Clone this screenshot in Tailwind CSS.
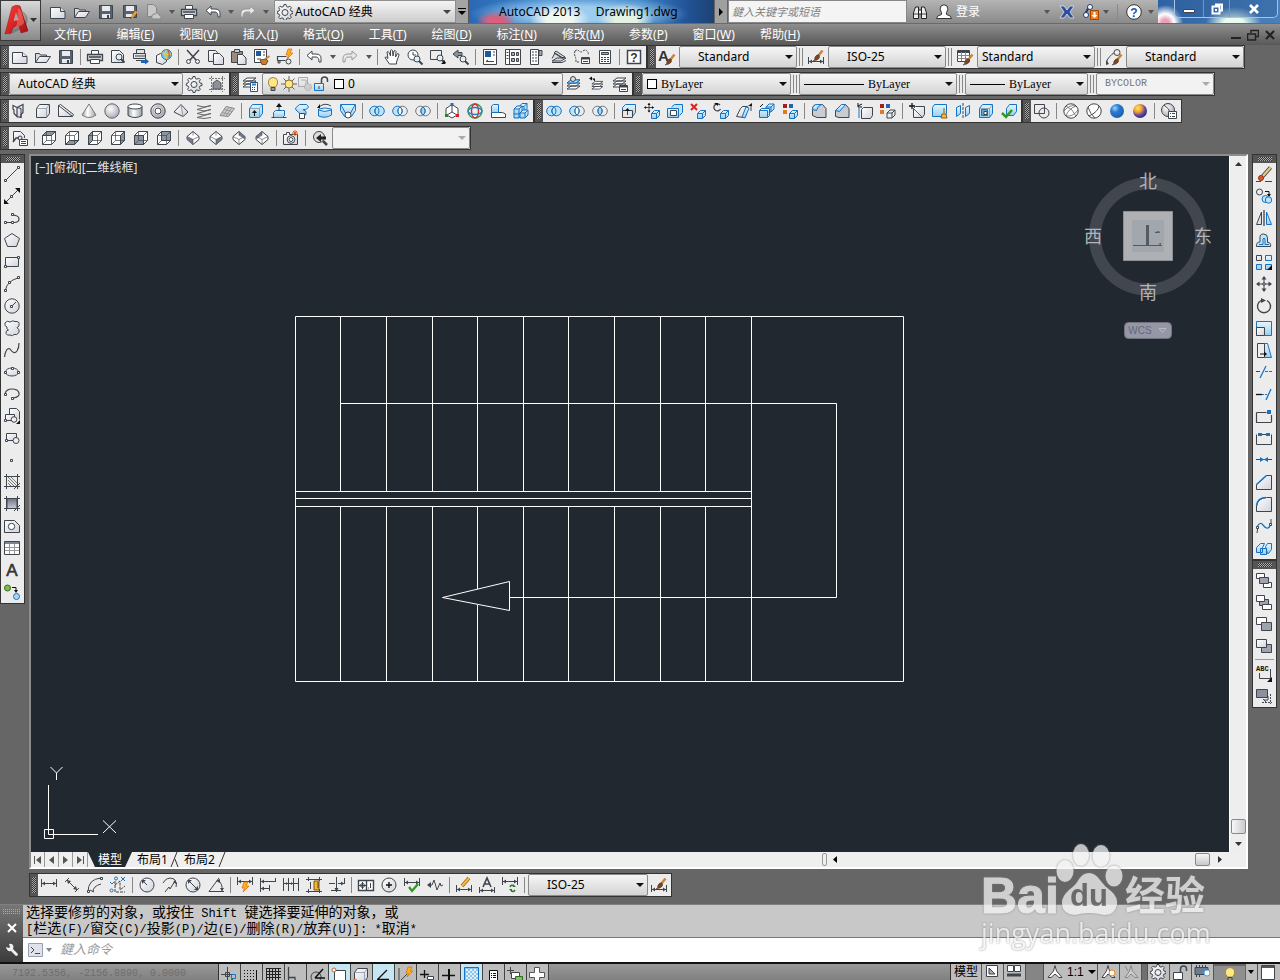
<!DOCTYPE html>
<html lang="zh-CN">
<head>
<meta charset="utf-8">
<title>AutoCAD 2013 - Drawing1.dwg</title>
<script src="https://cdn.jsdelivr.net/npm/@tailwindcss/browser@4"></script>
</head>
<body class="min-h-screen flex flex-col bg-[#666666] text-xs text-black font-['Noto_Sans','Noto_Sans_CJK_SC',sans-serif] overflow-x-hidden">

<svg class="absolute size-0" aria-hidden="true">
  <defs>
    <linearGradient id="gw" x1="0" y1="0" x2="1" y2="1"><stop offset="0" stop-color="#ffffff"/><stop offset="1" stop-color="#d0d3dc"/></linearGradient>
    <linearGradient id="gb" x1="0" y1="0" x2="0" y2="1"><stop offset="0" stop-color="#e6f6fe"/><stop offset="1" stop-color="#98cfef"/></linearGradient>
    <linearGradient id="gd" x1="0" y1="0" x2="0" y2="1"><stop offset="0" stop-color="#6d7480"/><stop offset="1" stop-color="#c9ccd2"/></linearGradient>
    <linearGradient id="gm" x1="0" y1="0" x2="1" y2="0"><stop offset="0" stop-color="#9da0a8"/><stop offset=".4" stop-color="#ffffff"/><stop offset="1" stop-color="#9da0a8"/></linearGradient>
    <radialGradient id="gs" cx=".4" cy=".35" r=".7"><stop offset="0" stop-color="#ffffff"/><stop offset="1" stop-color="#a3a7b2"/></radialGradient>
    <radialGradient id="gblue" cx=".35" cy=".3" r=".75"><stop offset="0" stop-color="#9ad4fa"/><stop offset=".4" stop-color="#2a7bd0"/><stop offset="1" stop-color="#1c5ea8"/></radialGradient>
    <radialGradient id="gsun" cx=".35" cy=".3" r=".8"><stop offset="0" stop-color="#ffe95a"/><stop offset=".35" stop-color="#f0a030"/><stop offset=".65" stop-color="#5a48a8"/><stop offset="1" stop-color="#252060"/></radialGradient>
    <linearGradient id="gred" x1="0" y1="0" x2="1" y2="1"><stop offset="0" stop-color="#f2463c"/><stop offset=".5" stop-color="#dc2222"/><stop offset="1" stop-color="#9c1114"/></linearGradient>
  </defs>
</svg>

<header class="flex bg-[#5c5c5c] shrink-0">
  <button aria-label="应用程序菜单" class="w-[41px] h-[41px] shrink-0 flex items-center border border-[#3a3a3a] bg-linear-to-b from-[#d8d8d8] to-[#8a8a8a] pl-[3px]">
    <svg viewBox="0 0 36 34" class="w-9 h-[34px]"><path d="M14 5Q30 12 20 24L5 31Z" fill="#555" opacity=".45"/><path d="M1 30 8 3Q12 0 16 2L24 27 17 29 15 22 9 23 7 29Z" fill="url(#gred)" stroke="#8e1014" stroke-width=".5"/><path d="M9.500 17 12 8 14.500 16Z" fill="#b9a0a0"/><path d="M14 4Q27 14 18 21L10 25 13 20Z" fill="#ff9a90" opacity=".4"/><path d="M24 27 16 2 20 17Z" fill="#7a0b0d"/><path d="M26 14h7l-3.500 4z" fill="#333"/></svg>
  </button>
  <div class="flex-1 min-w-0 flex flex-col">
    <div class="flex h-6 bg-[#6a6a6a]">
      <div class="flex h-[23px] items-center pl-[5px] w-[233px] shrink-0 bg-linear-to-b from-[#b4b4b4] to-[#8c8c8c]" data-qat="new open save saveas export ▾ print undo ▾ redo ▾"></div>
      <label class="flex h-[23px] w-[182px] shrink-0 items-center border border-[#8f8f8f] bg-linear-to-b from-[#f4f4f4] to-[#cdcdcd] pl-[2px] pr-1">
        <svg data-i="gear" class="size-4 shrink-0"></svg>
        <select aria-label="工作空间" class="flex-1 min-w-0 appearance-none bg-transparent outline-none text-xs pl-[2px]"><option>AutoCAD 经典</option></select>
        <svg viewBox="0 0 8 4" class="w-2 h-1 shrink-0"><path d="M0 0h8L4 4z" fill="#444"/></svg>
      </label>
      <button aria-label="自定义快速访问工具栏" class="w-[13px] h-[23px] shrink-0 grid place-items-center bg-[#a4a4a4] border-r border-[#555]"><svg viewBox="0 0 8 8" class="size-2"><path d="M0 0h8v1H0zM0 3h8L4 7z"/></svg></button>
      <div class="flex-1 min-w-0 h-[23px] overflow-hidden flex items-center pl-[30px] whitespace-pre bg-[radial-gradient(ellipse_20px_10px_at_11%_92%,#d8607c_40%,transparent),radial-gradient(ellipse_30px_16px_at_37%_85%,#f0f6f0_45%,transparent),radial-gradient(ellipse_28px_16px_at_64%_85%,#e4f2e4_40%,transparent),radial-gradient(ellipse_110px_18px_at_45%_60%,#9cccee_40%,transparent),linear-gradient(to_right,#2a68b4,#3d85cc_30%,#3f86c8_70%,#22559a_88%,#1c4272)]">AutoCAD 2013     Drawing1.dwg</div>
      <button aria-label="展开" class="w-[14px] h-[23px] shrink-0 grid place-items-center bg-[#a0a0a0] border-x border-[#666]"><svg viewBox="0 0 4 8" class="w-1 h-2"><path d="M0 0v8l4-4z"/></svg></button>
      <input aria-label="搜索" placeholder="鍵入关键字或短语" class="w-[179px] h-[23px] shrink-0 bg-[#f4f4f4] border border-[#888] pl-[3px] text-[11px] italic placeholder:text-[#808080] outline-none">
      <div class="flex items-center h-[23px] w-[251px] shrink-0 pl-[5px] bg-linear-to-b from-[#b4b4b4] to-[#8a8a8a] text-white">
        <button aria-label="搜索"><svg data-i="binoc" class="size-4"></svg></button>
        <button class="flex items-center ml-2 gap-1 w-[108px]"><svg data-i="person" class="size-4"></svg>登录</button>
        <svg viewBox="0 0 6 4" class="w-[6px] h-1"><path d="M0 0h6L3 4z" fill="#555"/></svg>
        <button aria-label="Exchange" class="ml-[9px]"><svg data-i="exch" class="size-4"></svg></button>
        <button aria-label="更新" class="ml-2"><svg data-i="sat" class="size-4"></svg></button>
        <svg viewBox="0 0 6 4" class="w-[6px] h-1 ml-1"><path d="M0 0h6L3 4z" fill="#555"/></svg>
        <span class="w-px h-4 bg-[#8a8a8a] ml-2"></span>
        <button aria-label="帮助" class="ml-2"><svg data-i="qcircle" class="size-4"></svg></button>
        <svg viewBox="0 0 6 4" class="w-[6px] h-1 ml-[6px]"><path d="M0 0h6L3 4z" fill="#555"/></svg>
      </div>
      <div class="flex items-start h-[23px] w-[122px] shrink-0 pl-4 bg-[radial-gradient(circle_18px_at_6%_100%,#e8a0b8_20%,#ffffff_50%,transparent),radial-gradient(ellipse_28px_16px_at_62%_100%,#e8fbee_35%,transparent),linear-gradient(to_right,#2e62a4,#4a80ba)]">
        <div class="flex h-[18px] w-[104px] rounded-b-[5px] border border-t-0 border-[#a9c4e2] divide-x divide-[#6f96c4] bg-[#2e5c98]/40">
          <button aria-label="最小化" class="w-[29px] grid place-items-center"><svg viewBox="0 0 12 10" class="w-3 h-[10px]"><path d="M.5 5.500h11v3H.5z" fill="#fff" stroke="#445"/></svg></button>
          <button aria-label="还原" class="w-[26px] grid place-items-center"><svg viewBox="0 0 12 12" class="size-3"><path d="M4 1.500h7v6H9.500M1.500 3.500h7v7h-7z" fill="none" stroke="#fff" stroke-width="2"/><path d="M4 6h2v2H4z" fill="#fff"/></svg></button>
          <button aria-label="关闭" class="flex-1 grid place-items-center"><svg viewBox="0 0 12 10" class="w-3 h-[10px]"><path d="M2 1l8 8M10 1 2 9" stroke="#fff" stroke-width="2.600"/></svg></button>
        </div>
      </div>
    </div>
    <nav class="flex gap-px h-[21px] items-center pl-px text-white bg-linear-to-b from-[#8f8f8f] to-[#585858] *:[a]:px-3">
      <a href="#">文件(<u>F</u>)</a><a href="#">编辑(<u>E</u>)</a><a href="#">视图(<u>V</u>)</a><a href="#">插入(<u>I</u>)</a><a href="#">格式(<u>O</u>)</a><a href="#">工具(<u>T</u>)</a><a href="#">绘图(<u>D</u>)</a><a href="#">标注(<u>N</u>)</a><a href="#">修改(<u>M</u>)</a><a href="#">参数(<u>P</u>)</a><a href="#">窗口(<u>W</u>)</a><a href="#">帮助(<u>H</u>)</a>
      <div class="ml-auto flex gap-[5px] pr-1">
        <button aria-label="最小化图形"><svg viewBox="0 0 12 12" class="size-3"><path d="M1 9h10" stroke="#222" stroke-width="2"/></svg></button>
        <button aria-label="还原图形"><svg viewBox="0 0 12 12" class="size-3"><path d="M4 4V1.500h7.500v6H9M.5 5h8v6h-8z" fill="none" stroke="#222" stroke-width="1.500"/></svg></button>
        <button aria-label="关闭图形"><svg viewBox="0 0 12 12" class="size-3"><path d="M2 2l8 8M10 2l-8 8" stroke="#222" stroke-width="2.200"/></svg></button>
      </div>
    </nav>
  </div>
</header>

<div class="flex flex-col gap-[3px] shrink-0">
  <div class="flex">
    <div data-bar="new open save | print preview publish globe | cut copy paste match block | undo ▾ redo ▾ | pan zoomrt zoomwin zoomprev | props design toolpal sheets markup calc | help"></div>
    <div data-bar="textstyle [118,18,Standard] ‖ dimstyle [118,18,ISO-25] ‖ tablestyle [118,4,Standard] ‖ mlstyle [118,18,Standard]"></div>
  </div>
  <div class="flex">
    <div data-bar="[174,8,AutoCAD&nbsp;经典] gear wssettings"></div>
    <div data-bar="layerprops {layer} laycur layprev laystate"></div>
    <div data-bar="{color} ‖ {ltype} ‖ {lweight} ‖ {plot}"></div>
  </div>
  <div class="flex">
    <div data-bar="polysolid box wedge cone sphere cylinder torus pyramid helix planar | extrude presspull sweep revolve loft | union subtract intersect | 3dmove 3drotate 3dalign 3darray"></div>
    <div data-bar="union subtract intersect | extface moveface offface delface rotface taperface copyface colorface | filletedge chamferedge copyedge coloredge | imprint clean separate shell check"></div>
    <div data-bar="wire2d | wire3d hidden realistic concept | vsmanage"></div>
  </div>
  <div class="flex">
    <div data-bar="viewmgr | vtop vbottom vleft vright vfront vback | isosw isose isone isonw | camera | prevview {view}"></div>
  </div>
</div>

<main class="flex-1 min-h-0 flex pt-1">
  <div class="w-[25px] shrink-0"><div data-vbar="line xline pline polygon rect arc circle revcloud spline ellipse earc insert mkblock point hatch gradient region table mtext addsel"></div></div>

  <section class="flex-1 min-w-0 ml-1 mr-1 flex flex-col">
    <div class="flex-1 min-h-0 flex flex-col border-2 border-[#8c8c8c] border-r-white border-b-white bg-[#efefef]">
      <div class="flex-1 min-h-[600px] flex">
        <div class="relative flex-1 min-w-0 bg-[#212830] overflow-hidden">
          <svg class="absolute inset-0 size-full" viewBox="31 156 1198 696" preserveAspectRatio="xMinYMin slice" fill="none" stroke="#fff" role="img" aria-label="楼梯平面图">
            <path d="M295.500 316.500h608v365h-608zM295.500 491.500h456M295.500 498.500h456M295.500 506.500h456M751.500 316.500v365"/>
            <path d="M340.500 316v175M386.500 316v175M432.500 316v175M477.500 316v175M523.500 316v175M568.500 316v175M614.500 316v175M660.500 316v175M705.500 316v175"/>
            <path d="M340.500 506v175M386.500 506v175M432.500 506v175M477.500 506v83M477.500 605v76M523.500 506v175M568.500 506v175M614.500 506v175M660.500 506v175M705.500 506v175"/>
            <path d="M340.500 403.500h496v194h-327M442.500 597.500l67-16v29z"/>
            <path d="M48.500 785v49.500h49.500M44.500 829.500h9v9h-9z"/>
            <path d="M50.500 767l6 6 6-6M56.500 773v7M103 820.500l13 12.500M116 820.500l-13 12.500"/>
          </svg>
          <p class="relative w-fit pl-1 pt-1 leading-4 text-[#e4e4e4]">[−][俯视][二维线框]</p>
          <div class="absolute right-[15px] top-3 w-[132px]">
            <svg viewBox="0 0 132 178" class="w-[132px] h-[178px]" font-size="18" text-anchor="middle" fill="#b2b4b7" font-family="Noto Sans CJK SC">
              <circle cx="66" cy="68.500" r="53" fill="none" stroke="#41464f" stroke-width="12"/>
              <path d="M41.500 43.500h49v49h-49z" fill="#aeb0b3" stroke="#8d9094"/><path d="M50 52h32v32H50z" fill="#a2a7ae"/>
              <path d="M64 57h3v20h13v1H51v-1h13zM73 64l4-1 1 2h-5zM76 76l3-1v2z" fill="#555b62"/>
              <text x="66" y="20">北</text><text x="66" y="131">南</text><text x="11" y="75">西</text><text x="121" y="75">东</text>
              <rect x="42.500" y="154.500" width="47" height="16" rx="4" fill="#9597a7" stroke="#70727e"/>
              <text x="58" y="166" font-size="10" fill="#65677a" font-family="Liberation Sans">WCS</text><path d="M77 160.500h7l-3.500 4z" fill="none" stroke="#b9bbc6"/>
            </svg>
          </div>
        </div>
        <div class="w-[17px] shrink-0 bg-[#eeeeee] border-l border-white flex flex-col items-center justify-between pt-[6px] pb-[6px]">
          <svg viewBox="0 0 7 4" class="w-[7px] h-1"><path d="M0 4h7L3.500 0z" fill="#333"/></svg>
          <div class="flex flex-col items-center gap-2"><div class="w-[15px] h-[15px] border border-[#888] rounded-[2px] bg-linear-to-r from-[#f8f8f8] to-[#cbcbd0]"></div><svg viewBox="0 0 7 4" class="w-[7px] h-1"><path d="M0 0h7L3.500 4z" fill="#333"/></svg></div>
        </div>
      </div>
      <div class="h-[15px] shrink-0 flex items-center">
        <div class="flex divide-x divide-[#999] border-r border-[#999] h-[15px]">
          <button aria-label="首页" class="w-[14px] grid place-items-center"><svg viewBox="0 0 8 8" class="size-2"><path d="M0 0h1v8H0zM7 0v8L2 4z" fill="#555"/></svg></button>
          <button aria-label="上一页" class="w-[14px] grid place-items-center"><svg viewBox="0 0 8 8" class="size-2"><path d="M6 0v8L1 4z" fill="#555"/></svg></button>
          <button aria-label="下一页" class="w-[14px] grid place-items-center"><svg viewBox="0 0 8 8" class="size-2"><path d="M1 0v8l5-4z" fill="#555"/></svg></button>
          <button aria-label="末页" class="w-[14px] grid place-items-center"><svg viewBox="0 0 8 8" class="size-2"><path d="M7 0h1v8H7zM1 0v8l5-4z" fill="#555"/></svg></button>
        </div>
        <div class="flex h-[15px] items-center leading-[15px]">
          <button class="h-[15px] px-[10px] text-white bg-[#212830] [clip-path:polygon(0_0,100%_0,calc(100%-7px)_100%,7px_100%)]">模型</button>
          <button class="h-[15px] pl-[5px]">布局1</button>
          <svg viewBox="0 0 11 15" class="w-[11px] h-[15px]"><path d="M9 0 3 15M7 7l3 8" fill="none" stroke="#333"/></svg>
          <button class="h-[15px] pl-[5px]">布局2</button>
          <svg viewBox="0 0 11 15" class="w-[11px] h-[15px]"><path d="M10 0 4 15" fill="none" stroke="#333"/></svg>
        </div>
        <div class="ml-auto flex items-center w-[424px] shrink-0">
          <span class="w-[5px] h-[13px] border border-[#999] rounded-[2px]"></span>
          <svg viewBox="0 0 4 7" class="w-1 h-[7px] ml-[6px]"><path d="M4 0v7L0 3.500z"/></svg>
          <span class="ml-auto w-[15px] h-[13px] border border-[#888] rounded-[2px] bg-linear-to-b from-[#f8f8f8] to-[#c8c8cc]"></span>
          <svg viewBox="0 0 4 7" class="w-1 h-[7px] ml-2 mr-6"><path d="M0 0v7l4-3.500z" fill="#333"/></svg>
        </div>
      </div>
    </div>
    <div class="flex pt-[4px] pb-[7px]">
      <div data-bar="dlin dali darc dord | drad djog ddia dang | dquick dbase dcont dspace dbreak | dtol dcenter dinspect djogl | dedit dtedit dupdate | [120,18,ISO-25] dimstyle"></div>
    </div>
  </section>

  <div class="w-[26px] mr-[2px] shrink-0 flex flex-col">
    <div data-vbar="erase copyobj mirror offset array move rotate scale stretch trim extend breakpt break join chamfer fillet blend explode"></div>
    <div data-vbar="front back above under — textfront hatchback"></div>
  </div>
</main>

<section class="flex shrink-0 h-[58px] border-t border-[#808080]">
  <div class="w-[23px] shrink-0 flex flex-col items-center justify-between pt-1 pb-1 bg-linear-to-b from-[#777] to-[#3c3c3c]">
    <svg viewBox="0 0 17 5" class="w-[17px] h-[5px]"><path d="M0 .5h17M0 2.500h17M0 4.500h17" stroke="#aaa" stroke-dasharray="1 1"/></svg>
    <button aria-label="关闭"><svg viewBox="0 0 12 12" class="size-3"><path d="M2 2l8 8M10 2l-8 8" stroke="#fff" stroke-width="2"/></svg></button>
    <button aria-label="自定义"><svg viewBox="0 0 16 16" class="size-4"><path d="M2 5l3 1 1-1-1-3q4-1 4.500 3L9 7l5 5q0 2-2 2L7 9Q3 10 2 5z" fill="#eee"/></svg></button>
  </div>
  <div class="flex-1 min-w-0 flex flex-col">
    <div class="h-[33px] pt-px pl-[3px] bg-[#c8c8c8] border-b border-[#777] text-sm leading-[15px] whitespace-pre font-['Liberation_Mono','Noto_Sans_CJK_SC',monospace]"><p>选择要修剪的对象，或按住<span class="text-xs leading-[15px]"> Shift </span>键选择要延伸的对象，或</p><p class="[&>span]:text-xs [&>span]:leading-[15px]"><span>[</span>栏选<span>(F)/</span>窗交<span>(C)/</span>投影<span>(P)/</span>边<span>(E)/</span>删除<span>(R)/</span>放弃<span>(U)]: *</span>取消<span>*</span></p></div>
    <label class="flex-1 flex items-center bg-white pl-[5px]">
      <svg viewBox="0 0 15 14" class="w-[15px] h-[14px]"><path d="M.5.5h14v13H.5z" fill="#dfe2ea" stroke="#9a9fae"/><path d="M3 4l3 3-3 3M7 10.500h5" fill="none" stroke="#444"/></svg>
      <svg viewBox="0 0 6 4" class="w-[6px] h-1 ml-[3px]"><path d="M0 0h6L3 4z" fill="#888"/></svg>
      <input aria-label="命令" placeholder="鍵入命令" class="flex-1 ml-2 text-[13px] italic placeholder:text-[#9a9a9a] outline-none">
    </label>
  </div>
</section>

<footer class="h-[18px] shrink-0 overflow-hidden flex items-start border-t-2 border-[#111] bg-linear-to-b from-[#989898] to-[#808080]">
  <div class="w-[218px] shrink-0 pl-3 pt-[4px] text-[10px] leading-3 text-[#6e6e6e] whitespace-nowrap font-['Liberation_Mono',monospace]">7192.5356, -2156.8890, 0.0000</div>
  <div class="flex border-l border-[#333]" data-status="sinfer ssnap sgrid sortho spolar *sosnap s3dosnap *sotrack sducs sdyn slwt *stpy sqp ssc splus"></div>
  <div class="ml-auto flex h-4 border-l border-[#333] divide-x divide-[#555] bg-[#bdbdbd]">
    <button class="w-[31px] h-4 leading-4">模型</button>
    <button aria-label="布局" class="w-[22px] pl-1"><svg data-i="slay" class="size-4"></svg></button>
    <button aria-label="快速查看" class="w-[22px] pl-[2px]"><svg data-i="sqv" class="size-4"></svg></button>
    <span class="w-[18px] bg-[#858585]"></span>
    <button class="w-[54px] flex items-center pl-[3px] gap-1 font-['Liberation_Sans'] whitespace-nowrap"><svg data-i="sann" class="size-4 shrink-0"></svg>1:1<svg viewBox="0 0 8 4" class="w-2 h-1 shrink-0"><path d="M0 0h8L4 4z"/></svg></button>
    <button aria-label="注释可见性" class="w-[22px] pl-[3px]"><svg data-i="sannv" class="size-4"></svg></button>
    <button aria-label="自动缩放" class="w-[22px] pl-[3px]"><svg data-i="sanna" class="size-4"></svg></button>
    <span class="w-[6px] bg-[#707070]"></span>
    <button aria-label="工作空间切换" class="w-[22px] pl-[2px]"><svg data-i="gear" class="size-4"></svg></button>
    <button aria-label="锁定" class="w-[22px] pl-[2px]"><svg data-i="slock" class="size-4"></svg></button>
    <button aria-label="硬件加速" class="w-[22px] pl-[2px]"><svg data-i="shw" class="size-4"></svg></button>
    <button aria-label="隔离对象" class="w-[32px] pl-2 bg-[#8f8f8f] border-t-2 border-[#666]"><svg data-i="bulb" class="size-4"></svg></button>
    <button aria-label="状态栏菜单" class="w-[12px] pl-[2px]"><svg viewBox="0 0 6 4" class="w-[6px] h-1"><path d="M0 0h6L3 4z"/></svg></button>
    <button aria-label="全屏" class="w-[22px] pl-[2px]"><svg data-i="sfull" class="size-4"></svg></button>
  </div>
</footer>

<div class="pointer-events-none absolute right-[66px] top-[840px] w-[236px]">
  <svg viewBox="0 0 236 114" class="w-[236px] h-[114px] opacity-75 drop-shadow-[0_0_1px_#777]" fill="#f4f4f4">
    <text x="3" y="73" font-family="Liberation Sans" font-weight="700" font-size="50" stroke="#f4f4f4">Bai</text>
    <ellipse cx="87" cy="31" rx="8.500" ry="11"/><ellipse cx="103" cy="15" rx="8" ry="11"/><ellipse cx="123" cy="16" rx="8.500" ry="11"/><ellipse cx="136" cy="36" rx="8.500" ry="10.500"/>
    <path d="M111 33Q117 33 122 40 126 46 133 51 140 57 139 65 137 75 126 75 118 73 111 73 104 73 97 75 84 74 84 63 84 56 91 50 98 45 101 39 105 33 111 33Z"/>
    <text x="92" y="66" font-family="Liberation Sans" font-weight="700" font-size="31" fill="#6c6c6c">du</text>
    <text x="147" y="70" font-family="Noto Sans CJK SC" font-weight="700" font-size="40">经验</text>
    <text x="3" y="103" font-family="Open Sans" font-size="27">jingyan.baidu.com</text>
  </svg>
</div>

<script>
const D='#3f454d', B='#1673c4';
const p=(d,a='')=>`<path d="${d}" ${a}/>`;
const w='fill="url(#gw)"', b='fill="url(#gb)"', sb=`stroke="${B}"`, bb=`fill="url(#gb)" stroke="${B}"`, k=`fill="${D}" stroke="none"`, K='fill="#111" stroke="none"';
const lens=(x,y)=>`<circle cx="${x}" cy="${y}" r="3" fill="#dff0f8"/>`+p(`M${x+2} ${y+2}l3.500 3.500`,'stroke-width="2"');
const cubeS=(x,y,a=bb)=>p(`M${x} ${y+3}l3-3h5v5l-3 3h-5zM${x} ${y+3}h5v5M${x+5} ${y+3}l3-3`,a);
const cubeL=(a)=>p('M1.500 5.500l3-4h10v9l-3 4h-10z',a)+p('M1.500 5.500h10v9M11.500 5.500l3-4','stroke="#7f8894" stroke-width=".7"');
const face=(f)=>p('M1.500 5.500l4-4h9v9l-4 4h-9z','fill="#fff"')+p(f,'fill="#8d95a1"')+p('M1.500 5.500h9v9M10.500 5.500l4-4M5.500 1.500v9h9M1.500 14.500l4-4','stroke-width=".7"');
const iso=(f)=>p('M8 1.500l6 5v3l-6 5-6-5v-3z','fill="#fff"')+p(f,'fill="#747b87" stroke="none"')+p('M2 6.500l6 3 6-3M8 9.500v5M8 1.500v4','stroke-width=".6"');
const dot=(x,y)=>p(`M${x-1} ${y-1}h2v2h-2z`,'fill="#fff"');
const brush=p('M14.500 1.500l-4 5','stroke="#c98538" stroke-width="2.500"')+p('M11 6Q13 9 9 11L5 12Q7 11 7 8 9 5 11 6Z','fill="#7a4528" stroke="#55301b" stroke-width=".5"');
const dimH=(y)=>p(`M.5 ${y-4}v8M15.500 ${y-4}v8M1 ${y+.5}h14`)+p(`M1 ${y+.5}l3-2v4zM15 ${y+.5}l-3-2v4z`,k);
const uni=(l,r,m)=>`<circle cx="5.500" cy="8" r="4.800" fill="${l}" stroke="${l=='none'?'#71767e':B}"/><circle cx="10.500" cy="8" r="4.800" fill="${r}" stroke="${r=='none'?'#71767e':B}"/>`+p('M8 4a5 5 0 010 8 5 5 0 010-8z',`fill="${m}" stroke="${B}"`);
const bolt=p('M10 0l4 0-2 4h3l-6 6 1.500-4H8z','fill="#ffb01e" stroke="#e06a00" stroke-width=".7"');
const gearP='M7 .5h2l.5 2 1.500.7 1.900-1 1.400 1.400-1 1.900.7 1.500 2 .5v2l-2 .5-.7 1.500 1 1.900-1.400 1.400-1.900-1-1.500.7-.5 2H7l-.5-2-1.500-.7-1.900 1-1.400-1.400 1-1.900L2 10 .3 9.500v-2L2 7l.7-1.500-1-1.900 1.400-1.400 1.900 1L6.500 2.500z';
const layers=p('M1 13l4-3h9l-4 3zM1 10l4-3h9l-4 3zM1 7l4-3h9l-4 3z','fill="#fff"');
const I={
new:p('M.5 3.500h10l4.500 4v7H.5z',w)+p('M10.500 3.500v4H15',w),
open:p('M.5 13.500v-9h4l1 1.500h6v2','fill="#d8dade"')+p('M.5 13.500l4-6h11l-4 6z',w),
save:p('M1.500 1.500h13v13h-13z','fill="#59626f"')+p('M4 2h8v5H4zM4 10h8v4H4z','fill="#e8eaee" stroke="none"')+p('M9 11h2v3H9z',k),
saveas:p('M1.500 1.500h13v12h-13z','fill="#59626f"')+p('M4 2h8v5H4zM4 10h6v3H4z','fill="#e8eaee" stroke="none"')+p('M14.500 7.500l-5 6','stroke="#f0a030" stroke-width="2.500"')+p('M8 15l.5-2 1.500 1z',k),
export:p('M1.500 .5h6l3 3v9h-9z','fill="#c8c8c8" stroke="#858585"')+p('M6 14q-1-4 3-4 3-3 4 1 3 0 2 4H6z','fill="#c8c8c8" stroke="#858585"'),
print:p('M4.500 6V1.500h7V6','fill="#fff"')+p('M.5 5.500h15v6H.5z','fill="#d4d6da" stroke-width="1.300"')+p('M2 8h12',"stroke-width='1.500'")+p('M3.500 10.500h9v4h-9z','fill="#fff"'),
preview:p('M1.500 1.500h8l4 4v8h-12z',w)+lens(9,8),
publish:p('M3.500 5V.5h8V5M.5 4.500h12v5H.5zM3 11.500h6','fill="#e0e2e6"')+p('M2 7h10')+p('M8 11h4V9l4 3.500-4 3V14H8z','fill="#1864b8" stroke="none"'),
globe:p('M.5 6.500l4-2h6v8l-4 3-6-2z',w)+'<circle cx="10.500" cy="5.500" r="5" fill="#6ec6f0" stroke="#2b7d9c"/>'+p('M6 4q4 2 9 1M10 1q-2 5 1 9','stroke="#f5c33a" stroke-width="1.600"')+p('M12 1q2 4 1 8','stroke="#d2452c"'),
cut:p('M2 1l9 10M14 1L5 11','stroke-width="1.500"')+'<circle cx="3.500" cy="12.500" r="2"/><circle cx="12.500" cy="12.500" r="2"/>',
copy:p('M.5 1.500h7l2 2v9h-9z',w)+p('M5.500 4.500h6l4 4v7h-10z',w),
paste:p('M.5 2.500h11v11H.5z','fill="#9b8c7d"')+p('M3.500.5h5v3h-5z','fill="#ccc"')+p('M6.500 5.500h5l3.500 3.500v6.500H6.500z',w),
match:p('M.5.5h12v13H.5z','fill="#fff"')+p('M2 2h5v5H2z','fill="#1c5a9c" stroke="none"')+p('M9 3h2M9 6h2M3 10h4')+p('M15.500 7l-4 3','stroke="#c98538" stroke-width="2"')+p('M6 11l6-1 2 2-2 3.500H8z','fill="#c87f35" stroke="#814a1a"'),
block:p('M.5 11.500v-4h9M.5 11.500h8','stroke-width="1.200"')+dot(2,13)+'<circle cx="11.500" cy="12.500" r="2.500"/>'+`<g transform="translate(1 0)">${bolt}</g>`,
undo:p('M1 6.500l5-4.500v3h4q5 0 5 4.500V13h-2q0-5-3-5H6v3z','fill="#fff"'),
redo:p('M15 6.500L10 2v3H6Q1 5 1 9.500V13h2q0-5 3-5h4v3z','fill="#e8e8e8" stroke="#999"'),
pan:p('M5.500 15L1 8.500q1-1.500 3 1L3 3q1.500-1 2 .5L6.500 7 6.500 1.500q1.500-1.500 2 0L9 7l1-5q1.500-1 2 .5L11.500 8 13.500 4.500q1.500 0 1.500 1.500L12.500 13v2z','fill="#fff"'),
zoomrt:'<circle cx="6" cy="6" r="5" fill="#fff"/>'+p('M6 3v3h3')+lens(10,10),
zoomwin:p('M.5 1.500h11v9H.5z')+lens(10,9)+p('M15 11v4h-4z',K),
zoomprev:p('M0 5l5-4v2.500h4v3H5V9z','fill="#8a9099"')+lens(10,10),
props:p('M1.500.5h13v15h-13z','fill="#fff"')+p('M3 2h6v6H3z','fill="#1c5a9c" stroke="none"')+p('M11 3h2M11 6h2M4 12.500h8M4 12.500l2-1.500'),
design:p('M.5.5h15v15H.5zM4.500.5v15','fill="#fff"')+p('M6.500 3.500h3v3h-3zM11.500 3.500h2v3h-2zM6.500 9.500h3v3h-3zM11.500 9.500h2v3h-2z','fill="#aab"')+p('M1.500 3.500h2M1.500 6.500h2M1.500 9.500h2'),
toolpal:p('M2.500.5h8v15h-8z','fill="#fff"')+p('M4 3h5M4 6h5M4 9h5M4 12h5','stroke-dasharray="2 1"')+p('M11 1.500h3v5h-3z','fill="#aab"'),
sheets:p('M1 12l5-3h9l-5 3zM1 9.500L4 4l8 5M5 2l9 6-3 1-8-5z','fill="#ddd"')+p('M1 13.500h10l4-2'),
markup:p('M1 2q2-2 4 0t4 0 4 0 1 4M1 2q-1 3 0 5t1 6h4','stroke-dasharray="2 1"')+p('M7.500 8.500h8v6h-8z','fill="#fff"')+p('M8 9.500h7',"stroke-width='2'")+p('M9 12.500h5'),
calc:p('M2.500 1.500h11v13h-11z','fill="#fff"')+p('M4.500 3.500h7v2h-7z','fill="#9ab"')+p('M4 8.500h8M4 10.500h8M4 12.500h8','stroke-dasharray="2 1"'),
help:p('M1.500 1.500h13v13h-13z','fill="#fff" stroke-width="1.500"')+'<text x="8" y="12.500" font-size="12" font-weight="700" text-anchor="middle" fill="#333" stroke="none" font-family="Liberation Sans">?</text>',
textstyle:'<text x="-1" y="12" font-size="15" font-weight="700" fill="#333" stroke="none" font-family="Liberation Sans">A</text>'+`<g transform="translate(1 4)">${brush}</g>`,
dimstyle:p('M.5 8v7M15.500 8v7M1 12.500h14')+p('M1 12.500l3-2v4zM15 12.500l-3-2v4z',k)+brush,
tablestyle:p('M.5 1.500h12v11H.5z','fill="#fff"')+p('M.5 3h12',"stroke-width='2'")+p('M.5 6.500h12M.5 9.500h12M4.500 3v9M8.500 3v9','stroke="#888"')+`<g transform="translate(1 4)">${brush}</g>`,
mlstyle:p('M1 14V11q6-8 8-7')+p('M0 11l3 4-3 1z',k)+'<circle cx="11" cy="3.500" r="3" fill="#eee"/>'+`<g transform="translate(1 4)">${brush}</g>`,
gear:p(gearP,w)+'<circle cx="8" cy="8.500" r="3" fill="#eee"/>',
wssettings:p('M2.500 0v16M13.500 0v16M0 2.500h16M0 13.500h16','stroke-dasharray="2 1" stroke="#777"')+p('M4 13V7l4-3 4 3v6z','fill="#8a919c" stroke="#555"'),
layerprops:`<g transform="translate(0 -2)">${layers}</g>`+p('M8.500 6.500h7v9h-7z','fill="#fff" stroke="#2a5580"')+p('M10 8.500h4','stroke="#2a7fc0" stroke-width="2"')+p('M10 11.500h4M10 13.500h4','stroke-dasharray="1 1"'),
laycur:layers+p('M1 7l4-3h9l-4 3z',bb)+'<circle cx="7" cy="3" r="2.500" fill="#ddd"/>',
layprev:`<g transform="translate(2 2) scale(.85)">${layers}</g>`+p('M0 2.500l3-2v4zM3 2.500h3v3',K),
laystate:`<g transform="translate(0 -2)">${layers}</g>`+p('M7.500 9.500h8v6h-8z','fill="#fff"')+p('M8 10.500h7',"stroke-width='2'")+p('M9 13.500h5'),
bulb:p('M5.500 11Q2.500 8 3.500 5 4 1.500 8 1.500t4.500 3.500q1 3-2 6z','fill="#ffe680" stroke="#a08a50"')+p('M6 11.500h4v3H6z','fill="#999"'),
sun:p('M8 0v16M0 8h16M2.500 2.500l11 11M13.500 2.500l-11 11','stroke="#666"')+'<circle cx="8" cy="8" r="4" fill="#ffe680" stroke="#8a7430"/>',
vpf:p('M1.500 1.500h9v9h-9zM4 4h5v5','stroke="#aaa"')+'<circle cx="11" cy="11" r="3.500" fill="#ccc" stroke="#aaa" stroke-dasharray="2 1"/>',
lock:p('M1.500 7.500h9v7h-9z',bb)+p('M8.500 7V4q0-3 3-3t3 3v2','stroke-width="1.500"')+p('M6 10v3'),
polysolid:p('M1 2.500l4 2v9l-3-3V7L1 6zM5 4.500l6-3v8l-2 2v3l-4-1','fill="url(#gw)" stroke-width="1.200"')+p('M5 4.500l4 1v9'),
box:cubeL('fill="url(#gw)"'),wedge:p('M.5 2.500v11h14zM.5 2.500l2-1 13 10-1 2',w),
cone:p('M8 1L15 12Q8 17 1 12z','fill="url(#gm)" stroke="#777"'),sphere:'<circle cx="8" cy="8" r="7.200" fill="url(#gs)" stroke="#666"/>',
cylinder:p('M1 3.500v9q7 4 14 0v-9','fill="url(#gm)"')+'<ellipse cx="8" cy="3.500" rx="7" ry="2.500" fill="#fff"/>',
torus:'<circle cx="8" cy="8" r="7.200" fill="url(#gs)"/><circle cx="8" cy="8" r="5" stroke="#aaa"/><circle cx="8" cy="8" r="3" fill="#fff"/>',
pyramid:p('M8 1.500L15 9l-5 4.500L1 9z',w)+p('M8 1.500l2 12','stroke="#999"'),
helix:p('M1 2.500q7 3 14 0M1 6.500l14-4M1 6.500q7 3 14 0M1 10.500l14-4M1 10.500q7 3 14 0M1 14.500l14-4M1 14.500q7 2 14 0','stroke="#666"'),
planar:p('M1 12.500l6-9 8.500 2-6 8z','fill="#c9ccd3" stroke="#888"')+p('M3 9.500l8.500 2M5 6.500l8.500 2M4 13l6-9M7 13.300l6-9','stroke="#999"'),
extrude:cubeL(bb)+p('M6.500 13V8',"stroke='#111'")+p('M4 10l2.500-3L9 10z',K),
presspull:p('M2.500 9.500l2-2h7l2 0v5l-2 2h-9z',bb)+p('M.5 14.500h3M11.500 14.500h4','stroke-width="1.200"')+p('M8 8V3')+p('M5 4l3-4 3 4z',K),
sweep:p('M1.500 5l4-3.500h7q4 3-1 5H9l3 2v3H7L2 7z',bb)+p('M5.500 10.500h5v5h-5z','fill="#fff"'),
revolve:p('M1.500 6q6-2 13 0v6q-6 4-13 1z',bb)+p('M1.500 7q6 3 13 0',sb)+p('M2 4q6-5 12-1')+p('M3 1v4H0z',K),
loft:p('M.5 1.500h15v6l-4 6h-7l-4-6z',bb)+p('M1 2l5 9M15 2l-5 9',sb)+'<circle cx="8" cy="12" r="3" fill="#fff"/>',
union:uni('#bfe3f7','#bfe3f7','#bfe3f7'),subtract:uni('#bfe3f7','none','#fff'),intersect:uni('none','none','#a8d8f5'),
'3dmove':p('M8 1.500l6 4v6l-6 3.500-6-3.500v-6z','fill="#fff"')+p('M8 2v7M8 9l5 3M8 9l-5 3')+p('M6.500 0h3v3h-3z','fill="#1673c4" stroke="none"')+p('M12 11h3v3h-3z','fill="#c22" stroke="none"')+p('M1 11h3v3H1z','fill="#282" stroke="none"'),
'3drotate':'<circle cx="8" cy="8" r="7" stroke="#3a9a5a" stroke-width="1.400"/><ellipse cx="8" cy="8" rx="3.500" ry="7" stroke="#d03030" stroke-width="1.400"/><ellipse cx="8" cy="8" rx="7" ry="3.500" stroke="#2a7fc0" stroke-width="1.400"/>',
'3dalign':p('M1.500 9.500h11l3 1.500v3.500h-14z','fill="#fff"')+p('M1.500 3l2-1.500h5v8h-7z',bb),
'3darray':cubeS(6,.5)+cubeS(1,7)+cubeS(7,7)+cubeS(1,3),
extface:p('M1.500 4.500l3-3h10v8l-3 4h-10z',bb)+p('M1.500 7.500h10v7h-10z','fill="#e8e8ea"')+p('M6.500 12V6')+p('M4 8l2.500-3L9 8z',K),
moveface:p('M5 0v9M.5 4.500h9')+p('M3.500 2L5 0l1.500 2zM3.500 7.500L5 9.500l1.500-2zM2 3L0 4.500 2 6zM8 3l2 1.500L8 6z',K)+cubeS(7.500,7.500),
offface:p('M4.500 4l3-2.500h8v8l-3 3','fill="#bfe3f7" stroke="#1673c4"')+p('M.5 5.500h11v9H.5z',bb)+p('M3.500 7.500h6v5h-6z','fill="#fff"'),
delface:p('M1 1l6 6M7 1L1 7','stroke="#d22" stroke-width="2"')+cubeS(7.500,7.500),
rotface:p('M7 2a3.500 3.500 0 10.500 4','stroke-width="1.300"')+p('M1 0h4v3z',K)+cubeS(7.500,7.500),
taperface:p('M.5 13.500l4-8 2-2h5l-2 10-2 1z',w)+p('M6 14l4-10 3 1-4 10z',bb)+p('M15 8V3')+p('M12 3h4V0z',K),
copyface:cubeS(7,1)+p('M.5 7.500l2-2h8v7l-2 2h-8z',bb)+p('M.5 7.500h8v7',sb)+p('M1 4l3-3',"stroke='#111'"),
colorface:p('M1 1h4v4H1z','fill="#a02020" stroke="none"')+p('M7 1h4v4H7z','fill="#2a60b0" stroke="none"')+p('M1 7h4v4H1z','fill="#e07a20" stroke="none"')+cubeS(7.500,7.500),
filletedge:p('M1.500 12.500v-6q0-5 5-5h5l3.500 4v9h-9z','fill="#c9ccd3"')+p('M1.500 6.500q0-5 5-5h4q-4 1-5 6z',bb),
chamferedge:p('M1.500 13.500v-6l6-6h4l3.500 4v9H5z','fill="#c9ccd3"')+p('M1.500 7.500l6-6h4l-6 7z',bb),
copyedge:p('M4.500 6.500l2-2h9v8l-2 3h-9z',w)+p('M2 5v10',sb)+p('M1 3l4-2M1 0v4h4','stroke="#111"'),
coloredge:p('M0 1h4v4H0z','fill="#a02020" stroke="none"')+p('M6 1h4v4H6z','fill="#2a60b0" stroke="none"')+p('M0 7h4v4H0z','fill="#e07a20" stroke="none"')+cubeS(7,7,'fill="#eee"'),
imprint:p('M4.500 5.500l2-2h9v8l-2 3h-9z',w)+p('M5 6l8 8',sb)+p('M3 0v6M0 3h6','stroke="#111" stroke-width="1.300"'),
clean:p('M.5 4.500l2-3h12v9l-2 3H.5z',bb)+p('M12 5v5M9 15l1-4h4l1 4z','fill="#f5b942" stroke="#8a5a10"'),
separate:p('M1.500 4.500l4-2v8l-4 3zM10.500 4.500l4-2v8l-4 3z',bb)+p('M8 0v16','stroke-dasharray="3 1"'),
shell:cubeL(bb)+p('M3.500 6.500h6v6h-6z','fill="#5da7dc" stroke="#1673c4"')+p('M6 8.500h3v3H6z','fill="#fff"'),
check:p('M5.500 5.500l3-4h7v7l-3 4h-7z',bb)+p('M1 10l4 4 6-7','stroke="#2f9a20" stroke-width="2.500"'),
wire2d:p('M.5 1.500h10v9H.5z')+'<circle cx="10" cy="10" r="5"/>',
wire3d:'<circle cx="8" cy="8" r="7.200" fill="#fff"/>'+p('M3 3q7 3 10 10M13 3Q5 6 3 13M1 8q6-7 12-5M3 13q7 1 12-6','stroke="#666" stroke-width=".8"'),
hidden:'<circle cx="8" cy="8" r="7.200" fill="#fff"/>'+p('M2 4q2 7 7 11M13 3q-1 6-10 10','stroke="#555"'),
realistic:'<circle cx="8" cy="8" r="7" fill="url(#gblue)" stroke="none"/>',concept:'<circle cx="8" cy="8" r="7" fill="url(#gsun)" stroke="none"/>',
vsmanage:'<circle cx="7" cy="7" r="6.500" fill="url(#gs)"/>'+p('M3 2q5 3 7 9')+p('M7.500 8.500h8v7h-8z','fill="#fff"')+p('M9 10.500h5M9 13.500h5','stroke-dasharray="1 1 3"'),
viewmgr:p('M1.500 12V1.500h7l4 4V8',w)+p('M1 12l3-4h3','stroke-width="1.500"')+'<circle cx="8" cy="8" r="2"/>'+p('M7.500 9.500h8v6h-8z','fill="#fff"')+p('M9 11.500h5M9 13.500h5'),
vtop:face('M1.500 5.500l4-4h9l-4 4z'),vbottom:face('M1.500 14.500l4-4h9l-4 4z'),vleft:face('M1.500 5.500l4-4v9l-4 4z'),vright:face('M10.500 5.500l4-4v9l-4 4z'),
vfront:face('M1.500 5.500h9v9h-9z'),vback:face('M5.500 1.500h9v9h-9z'),
isosw:iso('M2 6.500l6 3v5l-6-5z'),isose:iso('M14 6.500l-6 3v5l6-5z'),isone:iso('M8 1.500l6 5v3l-6-4z'),isonw:iso('M8 1.500l-6 5v3l6-4z'),
camera:p('M.5 4.500h3v-2h3v2h8v10H.5z',w)+'<circle cx="8" cy="9.500" r="3.800" fill="#fff"/><circle cx="8" cy="9.500" r="2"/>'+p('M12 0v6M9 3h6M10 1l4 4M14 1l-4 4','stroke="#e25a1c"'),
prevview:'<circle cx="7" cy="7" r="5.500" fill="#ddd"/>'+p('M4 8l5-4v2.500h5v3H9V12z','fill="#222" stroke="none"')+p('M11 11l4 4','stroke-width="2.500"'),
line:p('M2 14L14 2')+dot(1.500,14.500)+dot(14.500,1.500),
xline:p('M2 14L14 2')+p('M0 16v-5l5 5zM16 0v5l-5-5z',K)+dot(7.500,8.500),
pline:p('M1 12.500h9q5 0 5-3.500T9 5','stroke-width="1.200"')+dot(1.500,12.500)+dot(8.500,12.500)+dot(8.500,4.500),
polygon:p('M8 1.500l7.500 5-3 8h-9l-3-8z',w),rect:p('M1.500 3.500h13v9h-13z',w)+dot(1.500,12.500)+dot(14.500,3.500),
arc:p('M1.500 14Q3 5 14 2')+dot(1.500,14.500)+dot(5.500,6.500)+dot(14.500,1.500),
circle:'<circle cx="8" cy="8" r="7.200" fill="url(#gw)"/>'+p('M8 8l4-4')+dot(7.500,8.500),
revcloud:p('M3 7q-3-1-2-4 2-3 5-1 3-2 5-.5 5-.5 4 3.500 0 2-2 2.500 3 2 2 5-2 3-5 2-1 2-4 .500-3 1-4-1.500-.5-3 2.500-3.500Q2 9 3 7z','fill="url(#gw)"'),
spline:p('M.500 15Q2 5 6 7q4 6 7 2 2-3 2-8','stroke-width="1.200"'),
ellipse:'<ellipse cx="8" cy="8" rx="6.500" ry="4" fill="url(#gw)"/>'+dot(1.500,8.500)+dot(14.500,8.500)+dot(8.500,4.500),
earc:p('M1 8q1-5 7-5t7 4-6 5','stroke-width="1.200"')+dot(1.500,8.500)+dot(8.500,12.500),
insert:p('M5.500 6V.5h7l3 3v8',w)+p('M1.500 12.500v-6h9v6z',w)+dot(1.500,12.500)+'<circle cx="10" cy="11.500" r="2.800" fill="#eee"/>'+p('M16 12v4h-4z',K),
mkblock:p('M2.500 10.500v-7h10v7z',w)+dot(2.500,10.500)+'<circle cx="12" cy="10.500" r="3" fill="#eee"/>',
point:dot(7.500,8.500),
hatch:p('M2.500 0v15M13.500 0v15M0 2.500h16M0 12.500h16')+p('M4 6l6 6M4 3l9 9M7 3l6 6M4 9l3 3','stroke="#777"')+p('M16 9l-6 6'),
gradient:p('M3 2.500h10v10H3z','fill="url(#gd)"')+p('M2.500 0v15M13.500 0v15M0 2.500h16M0 12.500h16M16 9l-6 6'),
region:p('M.5 2.500h10l5 5v7H.5z',w)+'<circle cx="7.500" cy="8.500" r="3.200" fill="#fff"/>',
table:p('M.5 1.500h15v13H.5z','fill="#fff"')+p('M1 3h14','stroke="#7d8793" stroke-width="2"')+p('M1 7.500h14M1 10.500h14M5.500 4v10M10.500 4v10','stroke="#999"'),
mtext:'<text x="8" y="14" font-size="17" text-anchor="middle" fill="#333" stroke="#333" stroke-width=".6" font-family="Liberation Sans">A</text>',
addsel:'<circle cx="3.500" cy="4" r="3" fill="#7cbb4c" stroke="#356e1a"/><circle cx="12.500" cy="12.500" r="3" fill="#a8d8f5" stroke="#1673c4"/>'+p('M8 3.500h4v3','stroke="#111"')+p('M10 6h4l-2 3z',K),
erase:p('M14.500 1.500l-8 9','stroke="#333" stroke-width="4"')+p('M14.500 1.500l-8 9','stroke="#e5c98a" stroke-width="2.500"')+'<circle cx="5" cy="12" r="2.500" fill="#e0582a" stroke="#8a2a10"/>'+p('M0 15.500h5M9 15.500h7'),
copyobj:'<circle cx="3.500" cy="4" r="3" fill="#eee"/>'+p('M9 3.500h4v3','stroke="#111"')+p('M11 6h4l-2 3z',K)+'<circle cx="9.500" cy="11" r="3.500" fill="#bfe3f7" stroke="#1673c4"/><circle cx="12.500" cy="12" r="3.200" fill="#bfe3f7" stroke="#1673c4"/>',
mirror:p('M.5 14.500h5V2z',w)+p('M10.500 14.500h5L10.500 2z',bb)+p('M8 0v16','stroke-width="1.300"'),
offset:p('M.5 14.500h14q1-4-3-4V6q0-4-4-4T4 6v4q-4 0-3.500 4.500','fill="#bfe3f7"')+p('M3 12.500h4V7q1-2 2 0v5.500h4',sb),
array:p('M.5 1.500h5v5h-5z',w)+p('M9.500 1.500h6v5h-6zM.5 10.500h5v5h-5zM9.500 10.500h6v5h-6z',bb)+p('M16 11v5h-5z',K),
move:p('M8 1v14M1 8h14')+p('M5.500 3.500L8 0l2.500 3.500zM5.500 12.500L8 16l2.500-3.500zM3.500 5.500L0 8l3.500 2.500zM12.500 5.500L16 8l-3.500 2.500z',k)+dot(8,8),
rotate:p('M5 2.500a6.500 6.500 0 106 0','stroke-width="1.400"')+p('M5 0v5l5-2.500z',k),
scale:p('M.5 1.500h15v14H.5z',bb)+p('M.5 7.500h8v8h-8z',w),
stretch:p('M8.500 1.500h3l4 14h-7z',bb)+p('M1.500 1.500h7v14h-7z','fill="#eee"')+p('M4 12h6',"stroke='#111'")+p('M8 9.500v5l3-2.500z',K),
trim:p('M0 7.500h4')+p('M4 14L10 2',sb+' stroke-width="1.300"')+p('M9 7.500h7',sb+' stroke-dasharray="3 1"'),extend:p('M0 8.500h6',"stroke='#111' stroke-width='1.300'")+p('M6 8.500h5',sb+' stroke-dasharray="2 1"')+p('M10 14L15 3',sb+' stroke-width="1.300"'),
breakpt:p('M.5 4.500v10h15M.5 4.500h10M15.500 7v7','stroke-width="1.200" fill="none"')+p('M11 2h4v4h-4z','fill="#1673c4" stroke="none"'),
break:p('M.5 4.500v10h15v-10M6 4.500h4')+p('M2 3h4v3H2zM10 3h4v3h-4z','fill="#1673c4" stroke="none"'),
join:p('M0 7.500h16')+p('M4 5l4 2.500L4 10zM12 5L8 7.500 12 10z','fill="#1673c4" stroke="none"'),
chamfer:p('M.5 10.500v5h15v-14h-5l-10 9z',w)+p('M.5 10.500l10-9',sb+' stroke-width="1.500"'),
fillet:p('M.5 10v5.500h15V1.500h-5Q2 2 .5 10z',w)+p('M.5 10Q1 2 10 1.500',sb+' stroke-width="1.500"'),
blend:p('M1 15l1-7M15 1v6')+p('M1 9q3-6 6-2t5 3 3-5','stroke="#1673c4" stroke-width="1.300"')+dot(1.500,9.500)+dot(14.500,6.500),
explode:p('M.5 7.500l4-4h4l-2 4v5h-6zM9.500 6.500l2-3h4v6l-3 4h-1zM4.500 8.500h6v6h-6z',bb),
front:p('M.5 1.500h8v5h-8zM7.500 10.500h8v5h-8z','fill="#fff"')+p('M3.500 5.500h9v6h-9z','fill="#9ea3ac"'),
back:p('M3.500 5.500h9v6h-9z','fill="#9ea3ac"')+p('M.5 1.500h8v6h-8zM6.500 10.500h9v5h-9z','fill="#fff"'),
above:p('M.5 1.500h10v7H.5z','fill="#fff"')+p('M5.500 6.500h10v8h-10z','fill="#9ea3ac"'),
under:p('M5.500 6.500h10v8h-10z','fill="#9ea3ac"')+p('M.5 1.500h10v8H.5z',w),
textfront:'<text x="0" y="5" font-size="7" font-weight="700" fill="#111" stroke="none" font-family="Liberation Mono">ABC</text>'+p('M3.500 7v5.500h11V3')+p('M16 11v5h-5z',K),
hatchback:p('M.5 1.500h11v8H.5z','fill="#8a919c"')+p('M6 14.500h10M14.500 6v10','stroke-dasharray="2 1"')+p('M7 11l3 3M12 8v4H8'),
dlin:dimH(6),dali:p('M1 5l4-4M11 15l4-4M3 3l10 10')+p('M3 3l1 4 3-3zM13 13l-1-4-3 3z',k),
darc:p('M1 15Q1 2 14 1M6 15q0-6 8-8')+p('M3 13l4 2')+dot(1.500,14.500)+dot(14.500,1.500),
dord:p('M5 4v11h10M5 8l5-4v9l5-4','stroke-dasharray="3 1"')+p('M0 5l2 2 2-2M11 0l4 4M15 0l-4 4',sb)+`<circle cx="6" cy="1.500" r="1.500" ${sb}/><circle cx="1.500" cy="13.500" r="1.500" ${sb}/>`,
drad:'<circle cx="8" cy="8" r="7" fill="url(#gw)"/>'+p('M8 8L4 4')+p('M3 3h4L3 7z',k),
djog:p('M1 6Q5-1 12 2q4 4 2 8M3 15l4-5 1 2 5-8')+p('M14 3v4l-3-2z',k),
ddia:'<circle cx="8" cy="8" r="7" fill="url(#gw)"/>'+p('M3 3l10 10')+p('M3 3h4L3 7zM13 13H9l4-4z',k),
dang:p('M1 14.500h15M1 14.500L11 1M10 3q5 4 4 11')+p('M8 4l4-2v4zM12 11h4l-2 3z',k),
dquick:dimH(4)+`<g transform="translate(-3 5)">${bolt}</g>`,
dbase:p('M.5 1v14M15.500 1v4M9.500 8v6M1 4.500h14M1 11.500h8')+p('M1 4.500l3-2v4zM1 11.500l3-2v4z',k),
dcont:p('M.5 1v13M5.500 1v13M10.500 1v13M15.500 1v13M1 6.500h14')+p('M5 6.500L3 5v3zM10 6.500L8 5v3z',k),
dspace:p('M0 2.500h16M0 14.500h16M2.500 0v4M13.500 0v4M2.500 12v4M13.500 12v4')+p('M4.500 5v7')+p('M8 4h5v9H8z','fill="#f5b62a" stroke="#7a5410"')+p('M11 6h2M11 8h2M11 10h2'),
dbreak:p('M7.500 0v15M0 6.500h6M9 6.500h6M15.500 1v6M2 13.500h10')+p('M15 6.500l-3-2v4zM7.500 15l-2-4h4z',k),
dtol:p('M.5 3.500h15v10H.5zM8.500 3.500v10',"fill='#fff' stroke-width='1.400'")+'<circle cx="4.500" cy="8.500" r="2"/>'+p('M4.500 5v7M1 8.500h7M12.500 6v5M10 11h1'),
dcenter:'<circle cx="8" cy="8" r="7" fill="url(#gw)"/>'+p('M8 5v6M5 8h6','stroke="#111" stroke-width="1.400"'),
dinspect:dimH(5)+p('M5 10l3 4 6-7','stroke="#2f9a20" stroke-width="2.200"'),
djogl:p('M1 8h4l2-5 3 10 3-7 1 3 2-1')+p('M0 8l4-3v6z',k),
dedit:p('M.5 8v7M15.500 8v7M1 12.500h14')+p('M1 12.500l3-2v4zM15 12.500l-3-2v4z',k)+p('M13 1L6 9','stroke="#a86010" stroke-width="3.500"')+p('M13 1L6 9','stroke="#f5b942" stroke-width="2"'),
dtedit:p('M.5 10v6M15.500 10v6M1 13.500h14')+p('M1 13.500l3-2v4zM15 13.500l-3-2v4z',k)+p('M4 10L8 1l4 9M5.500 7h5','stroke-width="1.600"'),
dupdate:dimH(4)+p('M8 10q1-3 4-1M13 13q-2 3-4 0','stroke="#2b7a2b" stroke-width="1.500"')+p('M11 7l3 3h-3zM10 15l-3-3h3z','fill="#2b7a2b" stroke="none"'),
binoc:p('M1.500 14.500V9l2-6h3v11.500zM9.500 14.500V3h3l2 6v5.500zM6.500 6h3v4h-3z','fill="#eee" stroke="#222"')+p('M2 10h4M10 10h4'),
person:p('M.5 14.500q0-3 5-4V9Q3 5 5 2q3-2.500 6 0 2 3-.5 7v1.500q5 1 5 4z','fill="#fff" stroke="#333"'),
exch:p('M1 2h4l3 4 3-4h4l-4 6 4 6h-4L8 10l-3 4H1l4-6z','fill="#2c4f9c" stroke="#eef" stroke-width=".7"'),
sat:p('M2 10L6 3','stroke="#223a6a" stroke-width="2"')+'<circle cx="7" cy="3" r="2.500" fill="#fff" stroke="#223a6a"/><circle cx="3" cy="11" r="2.500" fill="#fff" stroke="#223a6a"/>'+p('M7.500 6.500h8v9h-8z','fill="#f08020" stroke="#a04a00"')+p('M10.500 8h2v3h2l-3 3-3-3h2z','fill="#fff" stroke="none"'),
qcircle:'<circle cx="8" cy="8" r="7.300" fill="#fff" stroke="#333"/><text x="8" y="12.500" font-size="12" font-weight="700" text-anchor="middle" fill="#1d55a8" stroke="none" font-family="Liberation Sans">?</text>',
sinfer:p('M6.500 0v14M0 7.500h14M4.500 5.500h4v4h-4z')+p('M10.500 7.500h4v4h-4z','stroke="#1673c4"')+p('M11 12v4','stroke="#c22" stroke-width="2"'),
ssnap:p('M1 3.500h10M1 6.500h10M1 9.500h10M1 12.500h10','stroke-dasharray="1 2" stroke="#111"')+p('M13.500 3v10','stroke="#111"'),
sgrid:p('M1 1.500h15M1 4.500h15M1 7.500h15M1 10.500h15M1 13.500h15M1.500 1v15M4.500 1v15M7.500 1v15M10.500 1v15M13.500 1v15','stroke="#222"'),
sortho:p('M1.500 0v16M1 10.500h7v6','stroke-width="1.300"'),
spolar:'<circle cx="7" cy="10" r="5"/>'+p('M6 11h10M6 11l8-9','stroke-width="1.500" stroke="#111"'),
sosnap:p('M3.500 3.500h11v13h-11z','fill="#fff"')+'<circle cx="3" cy="3" r="2" fill="#fff" stroke="#e25a1c"/>',
s3dosnap:cubeL('fill="url(#gw)"')+'<circle cx="2" cy="14" r="2" fill="#fff" stroke="#e25a1c"/>',
sotrack:p('M2 12.500h12M3 12L12 3','stroke="#111" stroke-width="1.300"'),
sducs:p('M2 1v14h12M2 15L10 7')+`<g transform="translate(1 0)">${bolt}</g>`,
sdyn:p('M5.500 3v8M1 7.500h9','stroke="#111" stroke-width="1.300"')+p('M8.500 9.500h6v3h-6z','fill="#fff"'),
slwt:p('M8 2v12','stroke="#111" stroke-width="2"')+p('M1 8.500h13','stroke="#111" stroke-width="1.500"'),
stpy:p('M1.500.5h14v16h-14z','fill="#8cc4ea" stroke="#1673c4"')+p('M3 3h11M3 7h11M3 11h11','stroke="#dff0fa" stroke-width="2" stroke-dasharray="2 2"')+p('M5 5h10M5 9h10M5 13h10','stroke="#dff0fa" stroke-width="2" stroke-dasharray="2 2"'),
sqp:p('M4.500 3.500h8v10h-8z','fill="#fff" stroke="#111"')+p('M6 6.500h5M6 8.500h5M6 10.500h5','stroke="#111" stroke-dasharray="1 1 3"'),
ssc:p('M3.500 0v7M0 3.500h7')+p('M4.500 5.500h8v6h-8z','fill="#fff"')+p('M8.500 9.500h7v6h-7z','fill="#7fbf6a" stroke="#2f6a20"'),
splus:p('M5.500.5h5v5h5v5h-5v5h-5v-5h-5v-5h5z','fill="#fff" stroke="#555"'),
slay:p('M.5 1.500h11v11H.5z','fill="#fff"')+p('M3 4v6h6z','fill="#aaa"'),
sqv:p('M1.500 1.500h6v6h-6zM8.500 1.500h6v6h-6z','fill="#fff"')+p('M1 11h14','stroke-width="3"'),
sann:p('M8 1.500L6.500 7 1 13.500h3L8 10l4 3.500h3L9.500 7z','fill="#fff"'),
sannv:p('M7 1.500L5.500 7 1 13.500h3L7 10l4 3.500h3L8.500 7z','fill="#fff"')+'<circle cx="11" cy="9" r="3" fill="#ffe" stroke="#f08020"/>',
sanna:p('M8 1.500L6.500 7 2 13.500h3L8 10l4 3.500h3L9.500 7zM2 2l3 5','fill="#ccc" stroke="#888"'),
slock:p('M1.500 8.500h9v7h-9z','fill="#fff"')+p('M8.500 8V5q0-3 3-3t3 3v2','stroke-width="1.500"'),
shw:p('M1 3.500h13v7H1z','fill="#6b7d96"')+p('M2.500 1v2M5.500 1v2M8.500 1v2M11.500 1v2M2.500 11v2M5.500 11v2')+'<circle cx="13" cy="9" r="3" fill="#fff" stroke="#4aa3e0"/>',
sfull:p('M1.500 1.500h13v14h-13z','fill="#fff"')+p('M2 3h12','stroke="#555" stroke-width="2"')
};
const svg=n=>`<svg viewBox="0 0 16 16" fill="none" stroke="${D}" class="size-4 shrink-0 overflow-visible" aria-hidden="true">${I[n]||''}</svg>`;
const arrow=(c='#111')=>`<svg viewBox="0 0 8 4" class="w-2 h-1 shrink-0" aria-hidden="true"><path d="M0 0h8L4 4z" fill="${c}"/></svg>`;
const combo=(width,inner,label,opt,extra='',off=false)=>`<label style="width:${width}px" class="flex h-[22px] shrink-0 items-center border border-[#8a8a8a] rounded-[2px] pr-[3px] ${off?'bg-[#f2f2f2] text-[#777]':'bg-linear-to-b from-[#f6f6f6] to-[#d4d4d4]'}">${inner}<select aria-label="${label}" ${off?'disabled':''} class="flex-1 min-w-0 appearance-none bg-transparent outline-none ${extra}">${opt?`<option>${opt}</option>`:''}</select>${arrow(off?'#aaa':'#111')}</label>`;
const swatch='<span class="size-[10px] border border-black bg-white shrink-0 ml-1"></span>';
const special={
 '{layer}':()=>combo(301,`<span class="flex items-center pl-[2px]">${svg('bulb')}${svg('sun')}${svg('vpf')}${svg('lock')}</span><span class="size-[10px] border border-black bg-white shrink-0 ml-[5px]"></span>`,'图层','0','pl-1'),
 '{color}':()=>combo(149,swatch,'颜色','ByLayer',"pl-1 font-['Liberation_Serif']"),
 '{ltype}':()=>combo(158,'<span class="w-[60px] h-px bg-black ml-1 shrink-0"></span>','线型','ByLayer',"pl-1 font-['Liberation_Serif']"),
 '{lweight}':()=>combo(123,'<span class="w-[35px] h-px bg-black ml-1 shrink-0"></span>','线宽','ByLayer',"pl-1 font-['Liberation_Serif']"),
 '{plot}':()=>combo(118,'','打印样式','BYCOLOR',"pl-2 text-[10px] font-['Liberation_Mono']",true),
 '{view}':()=>combo(138,'','视图','','',true)
};
const item=t=>{
  if(t=='|')return '<span class="w-[6px] h-4 shrink-0 pl-[2px]"><span class="block w-px h-4 bg-[#888]"></span></span>';
  if(t=='‖')return '<span class="w-2 h-[18px] shrink-0 flex justify-center gap-[2px]"><span class="w-px bg-[#888]"></span><span class="w-px bg-[#888]"></span></span>';
  if(t=='▾')return '<button aria-label="列表" class="w-[13px] h-[22px] flex items-center justify-center"><svg viewBox="0 0 6 4" class="w-[6px] h-1"><path d="M0 0h6L3 4z" fill="#555"/></svg></button>';
  if(special[t])return special[t]();
  if(t[0]=='['){const [a,l,n]=t.slice(1,-1).split(',');return combo(a,`<span style="width:${l}px"></span>`,n,n)}
  return `<button aria-label="${t}" class="w-[23px] h-[22px] pl-[3px] flex items-center shrink-0">${svg(t)}</button>`;
};
document.querySelectorAll('[data-bar]').forEach(e=>{
  e.className='flex h-6 items-center border border-[#333] bg-[#ececec] shrink-0';
  e.innerHTML='<span class="w-2 h-[22px] shrink-0 bg-[#555] flex justify-center items-center"><span class="w-1 h-4 bg-[repeating-conic-gradient(#aaa_0_25%,#333_0_50%)] bg-[length:2px_2px]"></span></span>'+e.dataset.bar.split(' ').map(item).join('');
});
document.querySelectorAll('[data-vbar]').forEach(e=>{
  e.className='flex flex-col w-[25px] border border-[#333] bg-[#ececec] shrink-0';
  e.innerHTML='<span class="h-2 shrink-0 bg-[#555] flex justify-center items-center"><span class="w-[14px] h-1 bg-[repeating-conic-gradient(#aaa_0_25%,#333_0_50%)] bg-[length:2px_2px]"></span></span>'+e.dataset.vbar.split(' ').map(t=>t=='—'?'<span class="h-[6px] shrink-0 px-[2px] pt-[2px]"><span class="block h-px bg-[#999]"></span></span>':`<button aria-label="${t}" class="h-[22px] w-[23px] pl-[3px] flex items-center shrink-0">${svg(t)}</button>`).join('');
});
document.querySelectorAll('[data-qat]').forEach(e=>{
  e.innerHTML=e.dataset.qat.split(' ').map(t=>t=='▾'?`<button aria-label="列表" class="w-[11px] flex justify-center"><svg viewBox="0 0 6 4" class="w-[6px] h-1"><path d="M0 0h6L3 4z" fill="#555"/></svg></button>`:`<button aria-label="${t}" class="w-6 pl-1 shrink-0">${svg(t)}</button>`).join('');
});
document.querySelectorAll('[data-status]').forEach(e=>{
  e.innerHTML=e.dataset.status.split(' ').map(t=>{const on=t[0]=='*';const n=on?t.slice(1):t;return `<button aria-label="${n}" class="w-[22px] h-5 pl-[2px] pt-px border-r border-[#444] ${on?'bg-[#c5e6f2]':'bg-[#bdbdbd]'}">${svg(n)}</button>`}).join('');
});
document.querySelectorAll('svg[data-i]').forEach(e=>{e.setAttribute('viewBox','0 0 16 16');e.setAttribute('fill','none');e.setAttribute('stroke',D);e.innerHTML=I[e.dataset.i];});
</script>
</body>
</html>
